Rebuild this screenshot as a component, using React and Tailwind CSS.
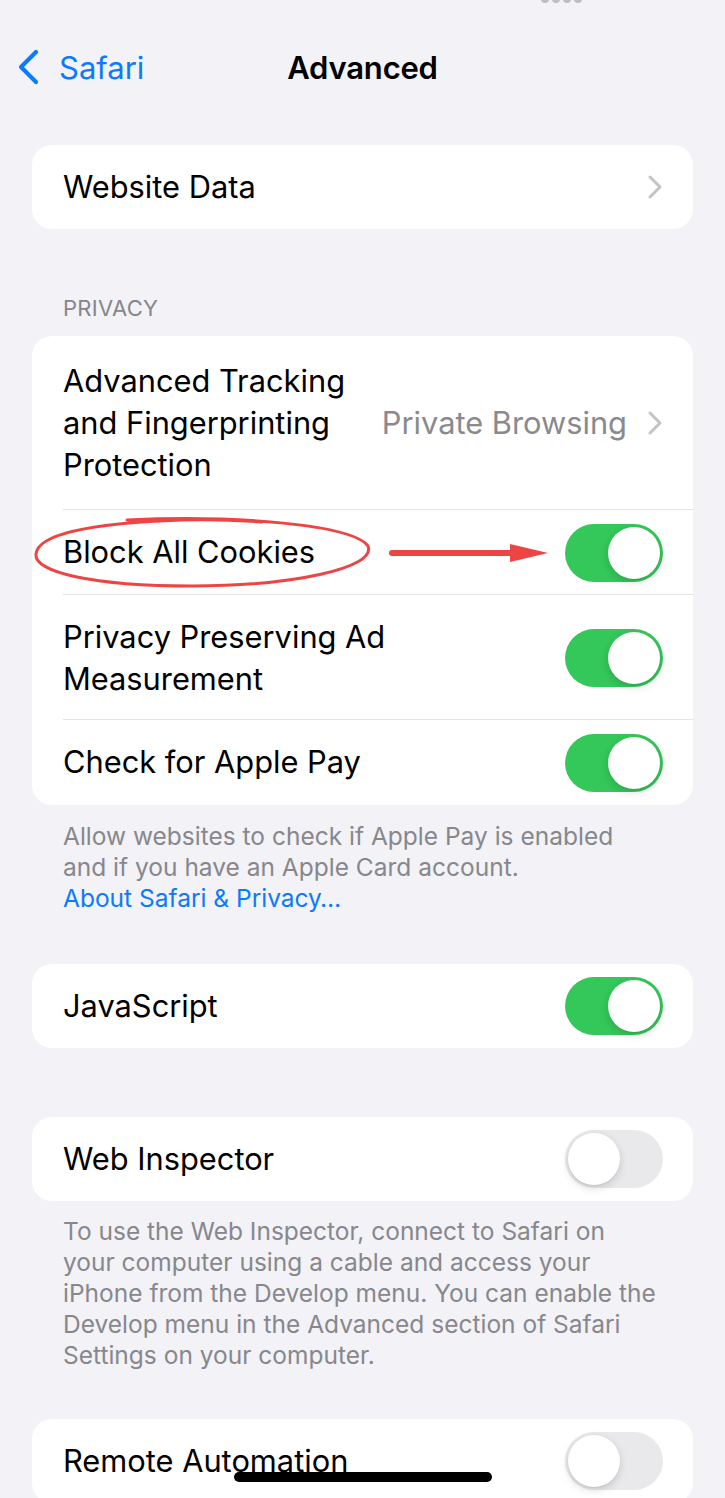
import React from 'react';

const font = { fontFamily: 'Inter, "Noto Sans", sans-serif' };

const Chevron = ({ className = '' }) => (
  <svg width="16" height="26" viewBox="0 0 16 26" className={className} fill="none">
    <path d="M3 3 L13 13 L3 23" stroke="#c4c4c7" strokeWidth="3" strokeLinecap="round" strokeLinejoin="round" />
  </svg>
);

const Toggle = ({ on }) => (
  <div
    className={`relative w-[98px] h-[58px] rounded-full shrink-0 ${on ? 'bg-[#34c759]' : 'bg-[#e9e9eb]'}`}
  >
    <div
      className={`absolute top-[3px] w-[52px] h-[52px] rounded-full bg-white shadow-[0_3px_8px_rgba(0,0,0,0.15),0_1px_1px_rgba(0,0,0,0.06)] ${on ? 'right-[3px]' : 'left-[3px]'}`}
    />
  </div>
);

const Card = ({ children, className = '' }) => (
  <div className={`mx-[32px] bg-white rounded-[20px] overflow-hidden ${className}`}>{children}</div>
);

const Row = ({ children, className = '', divider }) => (
  <div className={`relative flex items-center pl-[31px] pr-[30px] text-[30.8px] ${className}`}>
    {children}
    {divider && <div className="absolute left-[31px] right-0 bottom-0 h-px bg-[#e3e3e8]" />}
  </div>
);

const Footer = ({ children, className = '' }) => (
  <div className={`px-[63px] text-[24.5px] leading-[31px] text-[#87878c] ${className}`}>{children}</div>
);

const Annotation = () => (
  <svg
    className="absolute left-0 top-0 pointer-events-none"
    width="560"
    height="85"
    viewBox="0 0 560 85"
    fill="none"
  >
    <path
      d="M95 10 C 200 5, 320 14, 336 36 C 345 58, 260 76, 160 76 C 60 76, 2 62, 4 44 C 6 24, 60 13, 150 10 C 190 9, 215 11, 230 12"
      stroke="#ef4444"
      strokeWidth="3"
      strokeLinecap="round"
    />
    <path d="M360 43 L482 43" stroke="#ef4444" strokeWidth="6" strokeLinecap="round" />
    <path d="M478 34 L516 43 L478 52 Z" fill="#ef4444" />
  </svg>
);

export default function App() {
  return (
    <div className="relative w-[725px] h-[1498px] overflow-hidden bg-[#f2f2f7] text-black" style={font}>
      {/* status bar remnants */}
      <div className="absolute top-[-5px] left-[541px] flex gap-[3px]">
        <div className="w-[8px] h-[8px] rounded-full bg-[#bdbdc2]" />
        <div className="w-[8px] h-[8px] rounded-full bg-[#bdbdc2]" />
        <div className="w-[8px] h-[8px] rounded-full bg-[#bdbdc2]" />
        <div className="w-[8px] h-[8px] rounded-full bg-[#bdbdc2]" />
      </div>

      {/* nav */}
      <div className="relative flex items-center h-[46px] mt-[44px]">
        <div className="flex items-center pl-[16px] text-[#0a7aff]">
          <svg width="26" height="38" viewBox="0 0 26 38" fill="none">
            <path d="M20 4 L5 19 L20 34" stroke="#0a7aff" strokeWidth="4.2" strokeLinecap="round" strokeLinejoin="round" />
          </svg>
          <span className="ml-[17px] text-[31px] leading-none">Safari</span>
        </div>
        <div className="absolute inset-0 flex items-center justify-center pointer-events-none">
          <span className="text-[31px] font-semibold leading-none tracking-[-0.2px]">Advanced</span>
        </div>
      </div>

      {/* Website Data */}
      <Card className="mt-[55px]">
        <Row className="h-[84px] justify-between">
          <span>Website Data</span>
          <Chevron />
        </Row>
      </Card>

      {/* Privacy header */}
      <div className="pt-[66px] pb-[15px] px-[63px] text-[22px] leading-[26px] text-[#86868b] tracking-[0.3px]">
        PRIVACY
      </div>

      <Card>
        <Row className="h-[174px] justify-between" divider>
          <span className="leading-[42px]">
            Advanced Tracking
            <br />
            and Fingerprinting
            <br />
            Protection
          </span>
          <div className="flex items-center gap-[20px]">
            <span className="text-[#8a8a8e]">Private Browsing</span>
            <Chevron />
          </div>
        </Row>
        <Row className="h-[85px] justify-between" divider>
          <span>Block All Cookies</span>
          <Toggle on />
          <Annotation />
        </Row>
        <Row className="h-[125px] justify-between" divider>
          <span className="leading-[42px]">
            Privacy Preserving Ad
            <br />
            Measurement
          </span>
          <Toggle on />
        </Row>
        <Row className="h-[85px] justify-between">
          <span>Check for Apple Pay</span>
          <Toggle on />
        </Row>
      </Card>

      <Footer className="pt-[16px]">
        Allow websites to check if Apple Pay is enabled
        <br />
        and if you have an Apple Card account.
        <br />
        <span className="text-[#0a7aff]">About Safari &amp; Privacy…</span>
      </Footer>

      <Card className="mt-[50px]">
        <Row className="h-[84px] justify-between">
          <span>JavaScript</span>
          <Toggle on />
        </Row>
      </Card>

      <Card className="mt-[69px]">
        <Row className="h-[84px] justify-between">
          <span>Web Inspector</span>
          <Toggle />
        </Row>
      </Card>

      <Footer className="pt-[15px]">
        To use the Web Inspector, connect to Safari on
        <br />
        your computer using a cable and access your
        <br />
        iPhone from the Develop menu. You can enable the
        <br />
        Develop menu in the Advanced section of Safari
        <br />
        Settings on your computer.
      </Footer>

      <Card className="mt-[48px]">
        <Row className="h-[84px] justify-between">
          <span>Remote Automation</span>
          <Toggle />
        </Row>
      </Card>

      {/* home indicator */}
      <div className="absolute left-[234px] top-[1472px] w-[258px] h-[10px] rounded-full bg-black" />
    </div>
  );
}
